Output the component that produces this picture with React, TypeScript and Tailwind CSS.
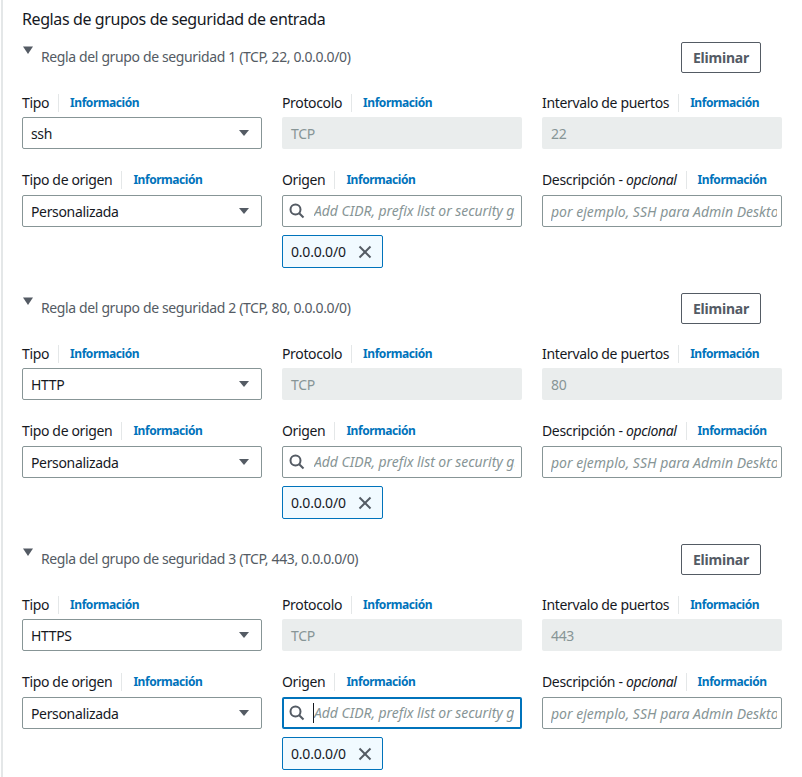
import React from "react";

const FONT = { fontFamily: '"Noto Sans", "Open Sans", sans-serif' };

function Label({ children }: { children: React.ReactNode }) {
  return (
    <div className="flex items-center h-[20px]">
      <span className="text-[14px] leading-[20px] tracking-[-0.35px] text-[#16191f] whitespace-nowrap">{children}</span>
      <span className="ml-[9px] mr-[11px] w-px h-[18px] bg-[#e4e7e8]" />
      <span className="text-[12px] leading-[20px] tracking-[-0.45px] font-bold text-[#0073bb]">Información</span>
    </div>
  );
}

function Caret() {
  return (
    <svg width="12" height="8" viewBox="0 0 12 8" className="shrink-0">
      <polygon points="1,1 11,1 6,7" fill="#545b64" />
    </svg>
  );
}

function SelectBox({ value, top }: { value: string; top: string }) {
  return (
    <div className={top + " h-[32px] border border-[#879596] rounded-[2px] bg-white flex items-center justify-between pl-[8px] pr-[11px]"}>
      <span className="text-[14px] tracking-[-0.35px] text-[#16191f]">{value}</span>
      <Caret />
    </div>
  );
}

function Disabled({ value }: { value: string }) {
  return (
    <div className="mt-[4px] h-[32px] rounded-[2px] bg-[#eaeded] flex items-center pl-[9px]">
      <span className="text-[14px] tracking-[-0.35px] text-[#879596]">{value}</span>
    </div>
  );
}

function SearchIcon() {
  return (
    <svg width="16" height="16" viewBox="0 0 16 16" fill="none" className="shrink-0">
      <circle cx="6.5" cy="6.5" r="5" stroke="#545b64" strokeWidth="2" />
      <line x1="10.2" y1="10.2" x2="14.5" y2="14.5" stroke="#545b64" strokeWidth="2" />
    </svg>
  );
}

function SearchBox({ focused }: { focused?: boolean }) {
  return (
    <div
      className={
        "mt-[5px] h-[32px] rounded-[2px] bg-white flex items-center whitespace-nowrap pr-[6px] " +
        (focused ? "border-2 border-[#0073bb] pl-[5px]" : "border border-[#879596] pl-[6px]")
      }
    >
      <SearchIcon />
      <span className="ml-[9px] relative flex items-center min-w-0 flex-1">
        {focused && <span className="absolute left-[-1px] top-[0px] w-px h-[20px] bg-[#16191f] z-10" />}
        <span className="block overflow-hidden text-[14px] leading-[20px] tracking-[-0.05px] italic text-[#879596]">
          Add CIDR, prefix list or security group
        </span>
      </span>
    </div>
  );
}

function TextBox() {
  return (
    <div className="mt-[5px] h-[32px] border border-[#879596] rounded-[2px] bg-white flex items-center pl-[8px] pr-[4px] whitespace-nowrap">
      <span className="block overflow-hidden min-w-0 text-[14px] tracking-[0px] italic text-[#879596]">
        por ejemplo, SSH para Admin Desktop
      </span>
    </div>
  );
}

function Token() {
  return (
    <div className="mt-[8px] w-[101px] h-[33px] border border-[#0073bb] rounded-[2px] bg-[#f1faff] flex items-center justify-between pl-[8px] pr-[10px]">
      <span className="text-[14px] tracking-[-0.2px] text-[#16191f]">0.0.0.0/0</span>
      <svg width="14" height="14" viewBox="0 0 14 14" className="shrink-0">
        <line x1="1.5" y1="1.5" x2="12.5" y2="12.5" stroke="#545b64" strokeWidth="2" />
        <line x1="12.5" y1="1.5" x2="1.5" y2="12.5" stroke="#545b64" strokeWidth="2" />
      </svg>
    </div>
  );
}

function Rule({ n, port, type, focused, first }: { n: number; port: string; type: string; focused?: boolean; first?: boolean }) {
  return (
    <div className={first ? "mt-[13px]" : "mt-[25px]"}>
      <div className="flex justify-between h-[31px]">
        <div className="flex items-start">
          <svg width="12" height="9" viewBox="0 0 12 9" className="mt-[4px]">
            <polygon points="1,0.5 11,0.5 6,8" fill="#545b64" />
          </svg>
          <span className="ml-[7px] mt-[5px] text-[14px] leading-[20px] tracking-[-0.37px] text-[#545b64] whitespace-nowrap">
            Regla del grupo de seguridad {n} (TCP, {port}, 0.0.0.0/0)
          </span>
        </div>
        <button className="mr-[21px] w-[80px] h-[31px] border border-[#545b64] rounded-[2px] bg-white text-[14px] tracking-[-0.2px] font-bold text-[#545b64] flex items-center justify-center">
          Eliminar
        </button>
      </div>
      <div className="mt-[20px] grid grid-cols-3 gap-x-[20px]">
        <div>
          <Label>Tipo</Label>
          <SelectBox value={type} top="mt-[4px]" />
        </div>
        <div>
          <Label>Protocolo</Label>
          <Disabled value="TCP" />
        </div>
        <div>
          <Label>Intervalo de puertos</Label>
          <Disabled value={port} />
        </div>
      </div>
      <div className="mt-[21px] grid grid-cols-3 gap-x-[20px]">
        <div>
          <Label>Tipo de origen</Label>
          <SelectBox value="Personalizada" top="mt-[5px]" />
        </div>
        <div>
          <Label>Origen</Label>
          <SearchBox focused={focused} />
          <Token />
        </div>
        <div>
          <Label>
            Descripción - <span className="italic">opcional</span>
          </Label>
          <TextBox />
        </div>
      </div>
    </div>
  );
}

export default function App() {
  return (
    <div style={FONT} className="w-[802px] h-[777px] overflow-hidden bg-white flex">
      <div className="w-[3px] shrink-0 bg-white flex justify-center">
        <div className="w-[2px] h-full bg-[#e4e7e8]" />
      </div>
      <div className="pl-[19px] pt-[9px] w-[779px]">
        <div className="w-[760px]">
          <h2 className="text-[16px] leading-[20px] tracking-[-0.4px] text-[#16191f]">Reglas de grupos de seguridad de entrada</h2>
          <Rule n={1} port="22" type="ssh" first />
          <Rule n={2} port="80" type="HTTP" />
          <Rule n={3} port="443" type="HTTPS" focused />
        </div>
      </div>
    </div>
  );
}
